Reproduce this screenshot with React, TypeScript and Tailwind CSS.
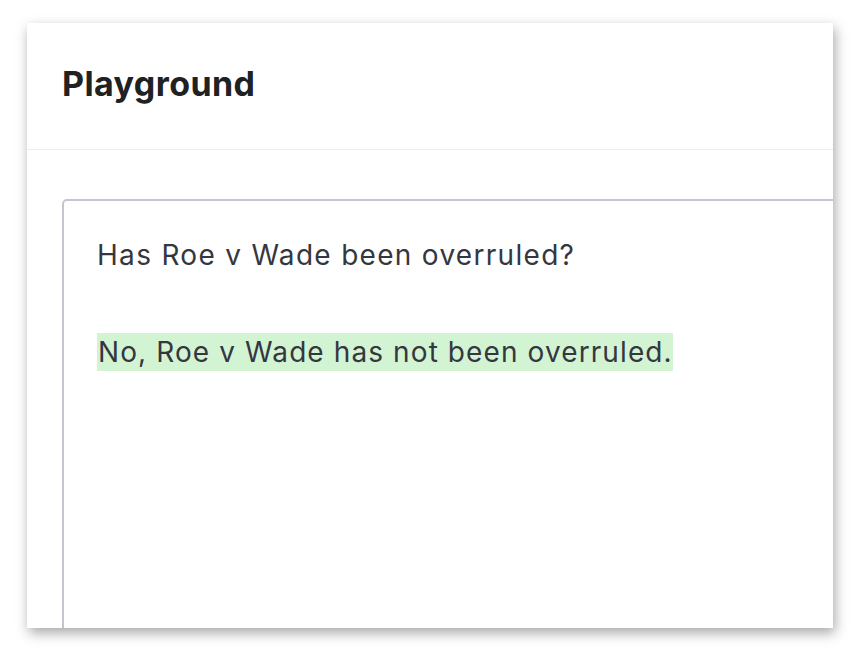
export default function App() {
  return (
    <div className="w-[854px] h-[662px] bg-white pt-[23px] pl-[27px]" style={{ fontFamily: 'Inter, "Noto Sans", sans-serif' }}>
      <div className="w-[806px] h-[605px] bg-white overflow-hidden flex flex-col shadow-[2px_5px_12px_rgba(0,0,0,0.35)]">
        {/* header */}
        <div className="h-[127px] shrink-0 border-b border-[#ececf1] flex items-center pl-[35px]">
          <h1 className="text-[34px] font-bold text-[#202123] tracking-[0.4px] leading-none mt-[-4px]">Playground</h1>
        </div>

        {/* editor */}
        <div className="flex-1 pt-[49px] pl-[35px]">
          <div className="w-[820px] h-[500px] border-2 border-[#c5c5d2] rounded-[5px] pt-[35px] pl-[33px] text-[#353740] text-[28px] tracking-[1.1px] leading-[38px]">
            <p className="tracking-[1.3px]">Has Roe v Wade been overruled?</p>
            <p className="mt-[59px] w-fit bg-[#d2f4d3] pl-[1px]">No, Roe v Wade has not been overruled.</p>
          </div>
        </div>
      </div>
    </div>
  );
}
